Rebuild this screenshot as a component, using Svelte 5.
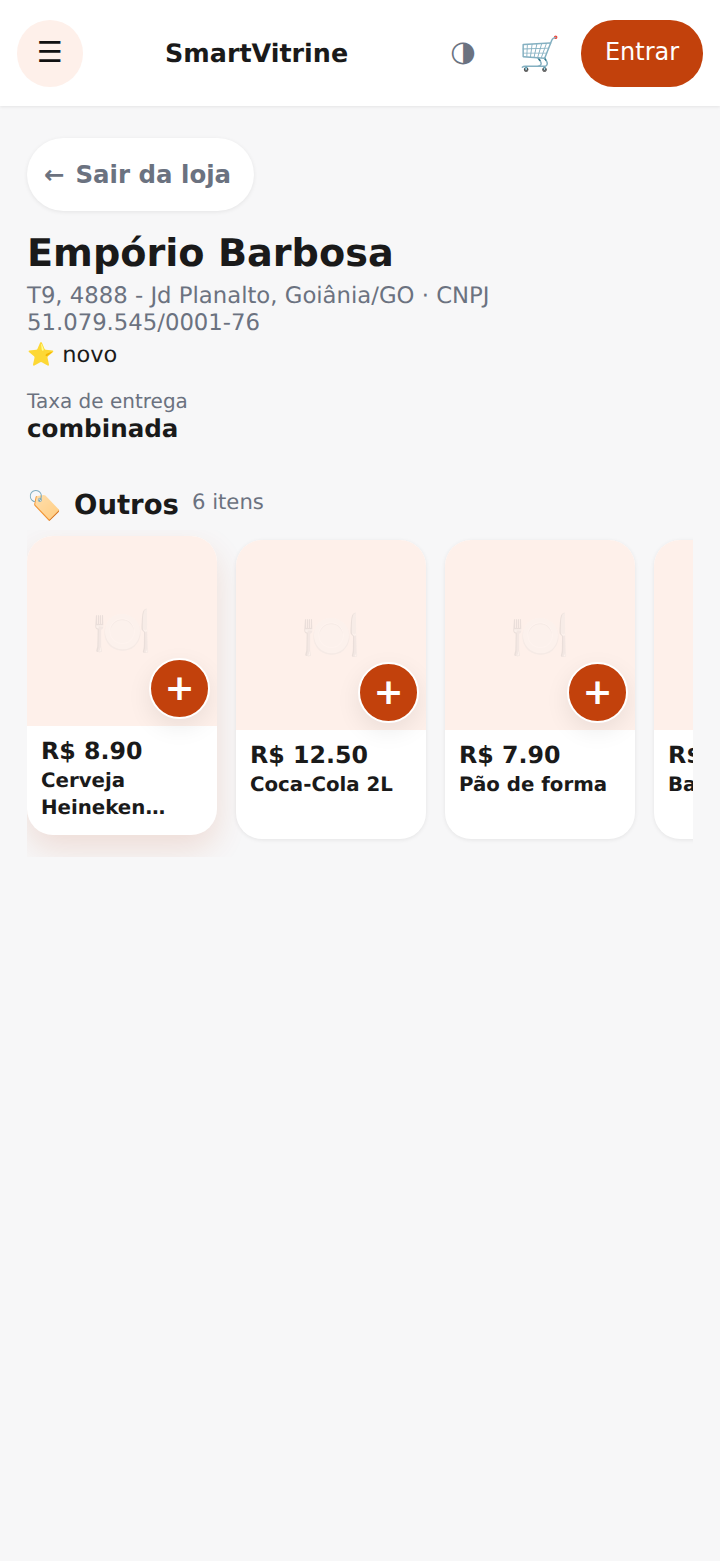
<script>
  const products = [
    { price: 'R$ 8.90', name: 'Cerveja Heineken Long Neck', hover: true },
    { price: 'R$ 12.50', name: 'Coca-Cola 2L' },
    { price: 'R$ 7.90', name: 'Pão de forma' },
    { price: 'R$ 5.50', name: 'Banana prata' }
  ];
</script>

<header class="topbar">
  <button class="menu-btn">☰</button>
  <div class="brand">SmartVitrine</div>
  <button class="theme-btn">◑</button>
  <button class="cart-btn">🛒</button>
  <button class="login-btn">Entrar</button>
</header>

<main class="page">
  <button class="back-btn"><span class="back-arrow">←</span>Sair da loja</button>
  <h1 class="store-name">Empório Barbosa</h1>
  <p class="store-address">T9, 4888 - Jd Planalto, Goiânia/GO · CNPJ 51.079.545/0001-76</p>
  <p class="store-rating">⭐ novo</p>

  <div class="fee">
    <span class="fee-label">Taxa de entrega</span>
    <strong class="fee-value">combinada</strong>
  </div>

  <div class="section-head">
    <span class="section-icon">🏷️</span>
    <h2 class="section-title">Outros</h2>
    <span class="section-count">6 itens</span>
  </div>

  <div class="rail">
    {#each products as p}
      <article class="card" class:hover={p.hover}>
        <div class="thumb">
          <span class="placeholder">🍽️</span>
          <button class="add-btn">+</button>
        </div>
        <div class="info">
          <div class="price">{p.price}</div>
          <div class="name">{p.name}</div>
        </div>
      </article>
    {/each}
  </div>
</main>

<style>
  :global(body) {
    background: #f7f7f8;
    font-family: "DejaVu Sans", sans-serif;
    color: #1a1a1a;
    text-rendering: geometricPrecision;
  }

  button {
    font-family: inherit;
    border: none;
    cursor: pointer;
  }

  .topbar {
    box-sizing: border-box;
    display: flex;
    align-items: center;
    height: 105.5px;
    padding: 1px 17px 0;
    background: #fff;
    box-shadow: 0 1px 3px rgba(0, 0, 0, 0.08);
  }

  .menu-btn {
    width: 66px;
    height: 66.5px;
    border-radius: 50%;
    background: #fef0ea;
    color: #111;
    font-size: 29px;
    font-weight: 700;
    padding: 0 0 2px;
  }

  .brand {
    margin-left: 82px;
    font-size: 25.4px;
    font-weight: 700;
    flex: 1;
  }

  .theme-btn {
    background: none;
    color: #6b7280;
    font-size: 29px;
    padding: 0 0 4px;
    width: 30px;
  }

  .cart-btn {
    background: none;
    font-size: 33px;
    padding: 0;
    margin-left: 41px;
    width: 40px;
  }

  .login-btn {
    margin-left: 22px;
    width: 122px;
    height: 66.5px;
    padding: 0 0 2px;
    border-radius: 33px;
    background: #c2410c;
    color: #fff;
    font-size: 24px;
  }

  .page {
    padding: 32.5px 27px;
  }

  .back-btn {
    display: flex;
    align-items: center;
    height: 73px;
    width: 227px;
    padding: 0 0 0 17px;
    border-radius: 37px;
    background: #fff;
    color: #6b7280;
    font-size: 24.45px;
    font-weight: 700;
    box-shadow: 0 1px 4px rgba(0, 0, 0, 0.08);
  }

  .back-arrow {
    margin-right: 11px;
  }

  .store-name {
    margin: 19px 0 0;
    font-size: 38.2px;
    line-height: 48px;
    font-weight: 700;
  }

  .store-address {
    margin: 5px 0 0;
    width: 500px;
    font-size: 22.75px;
    line-height: 27px;
    color: #6b7280;
  }

  .store-rating {
    margin: 3px 0 0;
    font-size: 22.5px;
    line-height: 30px;
  }

  .fee {
    margin-top: 18px;
  }

  .fee-label {
    display: block;
    font-size: 20px;
    line-height: 26px;
    color: #6b7280;
  }

  .fee-value {
    display: block;
    font-size: 24.6px;
    line-height: 30px;
  }

  .section-head {
    display: flex;
    align-items: center;
    gap: 13px;
    margin-top: 39px;
    height: 44px;
  }

  .section-icon {
    font-size: 28px;
    width: 34px;
  }

  .section-title {
    margin: 0;
    font-size: 27.5px;
    font-weight: 700;
  }

  .section-count {
    margin-bottom: 8px;
    font-size: 21.2px;
    color: #6b7280;
  }

  .rail {
    display: flex;
    gap: 19px;
    overflow: hidden;
    margin-top: 3px;
    padding: 10px 0 18px;
  }

  .card {
    flex: 0 0 190px;
    height: 299px;
    background: #fff;
    border-radius: 26px;
    overflow: hidden;
    box-shadow: 0 1px 4px rgba(0, 0, 0, 0.08);
    position: relative;
  }

  .card.hover {
    transform: translateY(-4px);
    box-shadow: 0 14px 32px rgba(194, 65, 12, 0.14);
  }

  .thumb {
    position: relative;
    height: 190px;
    background: #fef0ea;
    display: flex;
    align-items: center;
    justify-content: center;
  }

  .placeholder {
    font-size: 48px;
    opacity: 0.2;
    filter: grayscale(1);
  }

  .add-btn {
    position: absolute;
    right: 7px;
    bottom: 7px;
    width: 61px;
    height: 61px;
    border-radius: 50%;
    background: #c2410c;
    border: 2px solid #fff;
    color: #fff;
    font-size: 36px;
    font-weight: 700;
    line-height: 1;
    padding: 0 0 2px;
    box-shadow: 0 8px 24px rgba(0, 0, 0, 0.08);
  }

  .info {
    padding: 9.5px 14px 6px;
  }

  .price {
    font-size: 23.7px;
    line-height: 30px;
    font-weight: 700;
  }

  .name {
    margin-top: 1px;
    font-size: 19.8px;
    line-height: 27px;
    font-weight: 700;
    display: -webkit-box;
    -webkit-line-clamp: 2;
    -webkit-box-orient: vertical;
    overflow: hidden;
  }
</style>
